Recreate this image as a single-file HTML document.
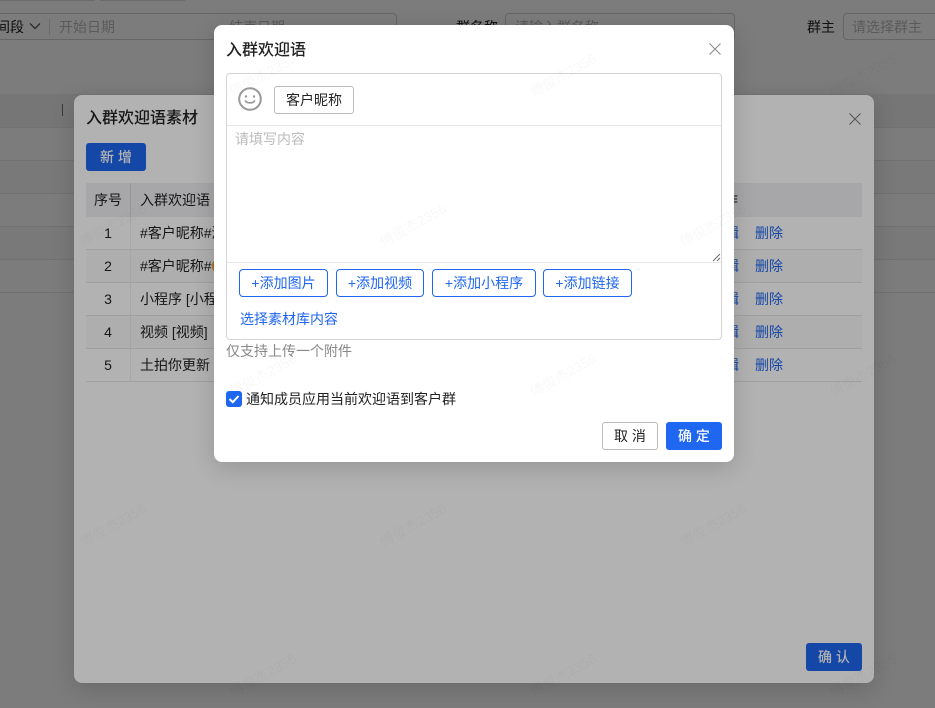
<!DOCTYPE html>
<html lang="zh-CN"><head><meta charset="utf-8"><title>入群欢迎语</title>
<style>
html,body{margin:0;padding:0;width:935px;height:708px;overflow:hidden;background:#fff}
body{position:relative;font-family:"Liberation Sans","Noto Sans CJK SC",sans-serif;font-size:14px;color:#222}
div,span{position:absolute;box-sizing:border-box;white-space:nowrap}
.t{line-height:20px;height:20px}
.ln{background:#e8e8e8;height:1px}
.ov{left:0;top:0;width:935px;height:708px;background:rgba(0,0,0,.3)}
.modal{background:#fff;border-radius:8px;box-shadow:0 6px 24px rgba(0,0,0,.16)}
.inp{border:1px solid #d2d2d2;border-radius:4px;height:27px;top:13px}
.row{left:0;width:776px;height:33px;border-bottom:1px solid #e6e6e6}
.c{text-align:center}
.bl{color:#1f66f0}
.add{top:244px;height:28px;border:1px solid #1f66f0;border-radius:4px;color:#1f66f0;text-align:center;line-height:26px}
.wm{color:rgba(0,0,0,.028);font-size:14px;line-height:20px;transform:rotate(-29deg);transform-origin:center;width:110px;text-align:center;z-index:20}
</style></head><body>

<!-- base page -->
<div style="left:0;top:0;width:95px;height:1px;background:#ddd"></div>
<div style="left:100px;top:0;width:85px;height:1px;background:#ddd"></div>
<div class="inp" style="left:-40px;width:437px"></div>
<div class="t" style="left:-18px;top:17px;color:#222">时间段</div>
<svg style="position:absolute;left:29px;top:22px" width="12" height="8" viewBox="0 0 12 8"><path d="M1 1.5 6 6.500 11 1.500" fill="none" stroke="#444" stroke-width="1.200"/></svg>
<div style="left:49px;top:19px;width:1px;height:16px;background:#ddd"></div>
<div class="t" style="left:59px;top:17px;color:#bbb">开始日期</div>
<div class="t" style="left:229px;top:17px;color:#bbb">结束日期</div>
<div class="t" style="left:456px;top:17px">群名称</div>
<div class="inp" style="left:505px;width:230px"></div>
<div class="t" style="left:515px;top:17px;color:#bbb">请输入群名称</div>
<div class="t" style="left:807px;top:17px">群主</div>
<div class="inp" style="left:843px;width:110px"></div>
<div class="t" style="left:852px;top:17px;color:#bbb">请选择群主</div>
<div style="left:0;top:94px;width:935px;height:33px;background:#f2f2f4"></div>
<div style="left:62px;top:104px;width:1px;height:12px;background:#777"></div>
<div class="ln" style="left:0;top:127px;width:935px"></div>
<div class="ln" style="left:0;top:160px;width:935px"></div>
<div style="left:0;top:161px;width:935px;height:32px;background:#fafafa"></div>
<div class="ln" style="left:0;top:193px;width:935px"></div>
<div class="ln" style="left:0;top:226px;width:935px"></div>
<div style="left:0;top:227px;width:935px;height:32px;background:#fafafa"></div>
<div class="ln" style="left:0;top:259px;width:935px"></div>
<div class="ln" style="left:0;top:292px;width:935px"></div>
<div class="ov"></div>

<!-- material modal -->
<div class="modal" style="left:74px;top:95px;width:800px;height:588px">
  <div style="left:12px;top:12px;font-size:16px;line-height:24px;color:#222;font-weight:500">入群欢迎语素材</div>
  <svg style="position:absolute;left:775px;top:18px" width="12" height="12" viewBox="0 0 12 12"><path d="M.5.5 11.500 11.500M11.500.5.5 11.500" stroke="#777" stroke-width="1"/></svg>
  <div style="left:12px;top:48px;width:60px;height:28px;background:#1f66f0;border-radius:3px;color:#fff;text-align:center;line-height:28px;font-weight:500">新 增</div>
  <div style="left:12px;top:88px;width:776px;height:295px">
    <div style="left:0;top:0;width:776px;height:34px;background:#f0f0f2"></div>
    <div style="left:44px;top:0;width:1px;height:34px;background:#d8d8d8"></div>
    <div class="t c" style="left:0;top:7px;width:44px">序号</div>
    <div class="t" style="left:54px;top:7px">入群欢迎语</div>
    <div class="t" style="left:624px;top:7px">操作</div>
    <div class="row" style="top:34px"></div>
    <div class="row" style="top:67px;background:#fafafa"></div>
    <div class="row" style="top:100px"></div>
    <div class="row" style="top:133px;background:#fafafa"></div>
    <div class="row" style="top:166px"></div>
    <div style="left:44px;top:34px;width:1px;height:165px;background:#eee"></div>
    <div class="t c" style="left:0;top:40px;width:44px">1</div>
    <div class="t" style="left:54px;top:40px">#客户昵称#润</div>
    <div class="t c" style="left:0;top:73px;width:44px">2</div>
    <div class="t" style="left:54px;top:73px">#客户昵称#</div>
    <span style="left:126px;top:76px;width:12px;height:14px;border-radius:50%;background:#f0a030"></span>
    <div class="t c" style="left:0;top:106px;width:44px">3</div>
    <div class="t" style="left:54px;top:106px">小程序 [小程序]</div>
    <div class="t c" style="left:0;top:139px;width:44px">4</div>
    <div class="t" style="left:54px;top:139px">视频 [视频]</div>
    <div class="t c" style="left:0;top:172px;width:44px">5</div>
    <div class="t" style="left:54px;top:172px">土拍你更新 [图片]</div>
    <div class="t bl" style="left:625px;top:40px">编辑</div><div class="t bl" style="left:669px;top:40px">删除</div>
    <div class="t bl" style="left:625px;top:73px">编辑</div><div class="t bl" style="left:669px;top:73px">删除</div>
    <div class="t bl" style="left:625px;top:106px">编辑</div><div class="t bl" style="left:669px;top:106px">删除</div>
    <div class="t bl" style="left:625px;top:139px">编辑</div><div class="t bl" style="left:669px;top:139px">删除</div>
    <div class="t bl" style="left:625px;top:172px">编辑</div><div class="t bl" style="left:669px;top:172px">删除</div>
  </div>
  <div style="left:732px;top:548px;width:56px;height:28px;background:#1f66f0;border-radius:3px;color:#fff;text-align:center;line-height:28px;font-weight:500">确 认</div>
</div>
<div class="ov"></div>

<!-- top modal -->
<div class="modal" style="left:214px;top:25px;width:520px;height:437px">
  <div style="left:12px;top:14px;font-size:16px;line-height:24px;color:#222;font-weight:500">入群欢迎语</div>
  <svg style="position:absolute;left:495px;top:18px" width="12" height="12" viewBox="0 0 12 12"><path d="M.5.5 11.500 11.500M11.500.5.5 11.500" stroke="#888" stroke-width="1"/></svg>
  <div style="left:12px;top:48px;width:496px;height:267px;border:1px solid #d4d4d4;border-radius:4px">
    <svg style="position:absolute;left:11px;top:13px" width="24" height="24" viewBox="0 0 24 24"><circle cx="12" cy="12" r="10.800" fill="none" stroke="#999" stroke-width="2"/><circle cx="8" cy="9.500" r="1.200" fill="#999"/><circle cx="16" cy="9.500" r="1.200" fill="#999"/><path d="M7.500 14c1.200 2.400 7.800 2.400 9 0" fill="none" stroke="#999" stroke-width="1.700" stroke-linecap="round"/></svg>
    <div style="left:47px;top:12px;width:80px;height:28px;border:1px solid #bbb;border-radius:3px;text-align:center;line-height:26px;color:#222">客户昵称</div>
    <div style="left:0;top:51px;width:494px;height:1px;background:#e8e8e8"></div>
    <div class="t" style="left:8px;top:55px;color:#bbb">请填写内容</div>
    <svg style="position:absolute;left:485px;top:179px" width="9" height="9" viewBox="0 0 9 9"><path d="M1 8 8 1M5 8 8 5" stroke="#666" stroke-width=".9"/></svg>
    <div style="left:0;top:188px;width:494px;height:1px;background:#e8e8e8"></div>
    <div class="t bl" style="left:13px;top:235px">选择素材库内容</div>
  </div>
  <div class="add" style="left:25px;width:89px">+添加图片</div>
  <div class="add" style="left:122px;width:88px">+添加视频</div>
  <div class="add" style="left:218px;width:104px">+添加小程序</div>
  <div class="add" style="left:329px;width:89px">+添加链接</div>
  <div class="t" style="left:12px;top:316px;color:#888">仅支持上传一个附件</div>
  <div style="left:12px;top:366px;width:16px;height:16px;background:#1f66f0;border-radius:3px"></div>
  <svg style="position:absolute;left:12px;top:366px" width="16" height="16" viewBox="0 0 16 16"><path d="M3.500 8 6.800 11.200 12.500 5" fill="none" stroke="#fff" stroke-width="2"/></svg>
  <div class="t" style="left:32px;top:364px;color:#222">通知成员应用当前欢迎语到客户群</div>
  <div style="left:388px;top:397px;width:56px;height:28px;border:1px solid #bbb;border-radius:3px;text-align:center;line-height:26px;color:#222">取 消</div>
  <div style="left:452px;top:397px;width:56px;height:28px;background:#1f66f0;border-radius:3px;text-align:center;line-height:28px;color:#fff;font-weight:500">确 定</div>
</div>

<!-- watermarks -->
<div class="wm" style="left:208px;top:65px">傅俊杰2356</div>
<div class="wm" style="left:508px;top:65px">傅俊杰2356</div>
<div class="wm" style="left:808px;top:65px">傅俊杰2356</div>
<div class="wm" style="left:58px;top:215px">傅俊杰2356</div>
<div class="wm" style="left:358px;top:215px">傅俊杰2356</div>
<div class="wm" style="left:658px;top:215px">傅俊杰2356</div>
<div class="wm" style="left:208px;top:365px">傅俊杰2356</div>
<div class="wm" style="left:508px;top:365px">傅俊杰2356</div>
<div class="wm" style="left:808px;top:365px">傅俊杰2356</div>
<div class="wm" style="left:58px;top:515px">傅俊杰2356</div>
<div class="wm" style="left:358px;top:515px">傅俊杰2356</div>
<div class="wm" style="left:658px;top:515px">傅俊杰2356</div>
<div class="wm" style="left:208px;top:665px">傅俊杰2356</div>
<div class="wm" style="left:508px;top:665px">傅俊杰2356</div>
<div class="wm" style="left:808px;top:665px">傅俊杰2356</div>
</body></html>
